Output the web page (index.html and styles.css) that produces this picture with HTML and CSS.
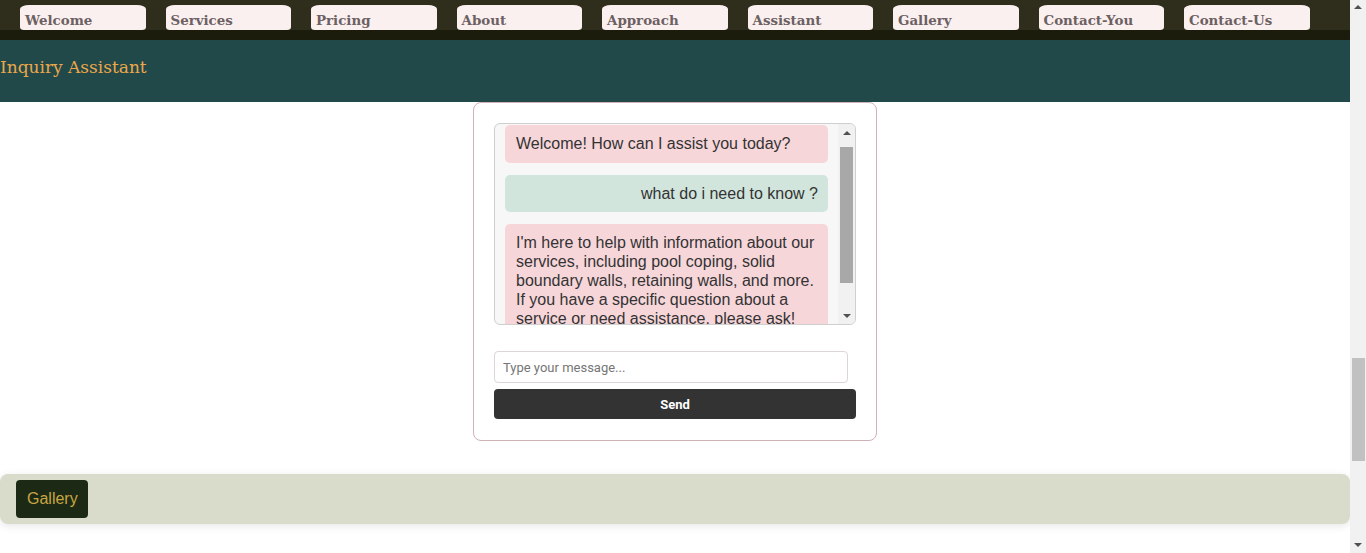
FILE: index.html
```html
<!DOCTYPE html>
<html lang="en">
<head>
<meta charset="utf-8">
<title>Inquiry Assistant</title>
<link rel="stylesheet" href="styles.css">
</head>
<body>
<div class="page">
  <nav class="topnav">
    <a class="tab">Welcome</a>
    <a class="tab">Services</a>
    <a class="tab">Pricing</a>
    <a class="tab">About</a>
    <a class="tab">Approach</a>
    <a class="tab">Assistant</a>
    <a class="tab">Gallery</a>
    <a class="tab">Contact-You</a>
    <a class="tab">Contact-Us</a>
  </nav>
  <header class="hero">
    <h1 class="hero-title">Inquiry Assistant</h1>
  </header>
  <main class="chat-wrap">
    <section class="chat">
      <div class="messages">
        <div class="msg-list">
          <div class="msg bot">Welcome! How can I assist you today?</div>
          <div class="msg user">what do i need to know ?</div>
          <div class="msg bot">I'm here to help with information about our services, including pool coping, solid boundary walls, retaining walls, and more. If you have a specific question about a service or need assistance, please ask!</div>
        </div>
        <div class="mini-scroll">
          <div class="ms-btn"><span class="arrow-up"></span></div>
          <div class="ms-track"><div class="ms-thumb"></div></div>
          <div class="ms-btn"><span class="arrow-down"></span></div>
        </div>
      </div>
      <input class="chat-input" type="text" placeholder="Type your message...">
      <button class="send-btn">Send</button>
    </section>
  </main>
  <footer class="gallery-bar">
    <button class="gallery-btn">Gallery</button>
  </footer>
</div>
<div class="vscroll">
  <div class="vs-btn"><span class="arrow-up"></span></div>
  <div class="vs-track"><div class="vs-thumb"></div></div>
  <div class="vs-btn"><span class="arrow-down"></span></div>
</div>
</body>
</html>
```
FILE: styles.css
```css
html, body {
  margin: 0;
  padding: 0;
  height: 553px;
  overflow: hidden;
  background: #ffffff;
}
body {
  display: flex;
}
.page {
  flex: 1;
  min-width: 0;
  height: 553px;
  display: flex;
  flex-direction: column;
}
.topnav {
  height: 30px;
  background: #2f2e1d;
  border-bottom: 10px solid #1c1c0c;
  display: flex;
  align-items: flex-end;
  gap: 20px;
  padding-left: 20px;
  flex-shrink: 0;
}
.tab {
  width: 125.5px;
  height: 25px;
  box-sizing: border-box;
  background: #fbf0f0;
  border-radius: 9px 9px 4px 4px / 4px 4px 3px 3px;
  font-family: "DejaVu Serif", serif;
  font-weight: bold;
  font-size: 13.4px;
  line-height: 21px;
  padding: 5px 0 0 5px;
  color: #6c6062;
  flex-shrink: 0;
}
.hero {
  height: 62px;
  box-sizing: border-box;
  background: #224949;
  padding-top: 15px;
  flex-shrink: 0;
}
.hero-title {
  margin: 0;
  font-family: "DejaVu Serif", serif;
  font-weight: normal;
  font-size: 17px;
  line-height: 24px;
  color: #eba74a;
}
.chat-wrap {
  display: flex;
  justify-content: center;
  flex-shrink: 0;
}
.chat {
  width: 404px;
  box-sizing: border-box;
  border: 1px solid #d0b1b6;
  border-radius: 8px;
  padding: 20px 20px 21px;
  background: #fff;
  display: flex;
  flex-direction: column;
}
.messages {
  height: 202px;
  box-sizing: border-box;
  border: 1px solid #cfcfcf;
  border-radius: 6px;
  background: #f7f7f7;
  overflow: hidden;
  display: flex;
  flex-shrink: 0;
}
.msg-list {
  flex: 1;
  min-width: 0;
  overflow: hidden;
  padding: 1px 10px 0 10px;
}
.msg {
  font-family: "Liberation Sans", Arial, sans-serif;
  font-size: 16px;
  line-height: 19px;
  color: #333;
  padding: 9px 10px 10px 11px;
  border-radius: 5px;
  margin-bottom: 12px;
}
.msg.bot {
  background: #f7d6da;
}
.msg.user {
  background: #d1e5dd;
  text-align: right;
  padding-bottom: 9px;
}
.mini-scroll {
  width: 17px;
  background: #f1f1f1;
  display: flex;
  flex-direction: column;
  flex-shrink: 0;
}
.ms-btn {
  height: 17px;
  display: flex;
  align-items: center;
  justify-content: center;
}
.ms-track {
  flex: 1;
}
.ms-thumb {
  margin: 6px 2px 0 2px;
  height: 136px;
  background: #a8a8a8;
}
.chat-input {
  margin-top: 26px;
  width: 354px;
  height: 32px;
  box-sizing: border-box;
  border: 1px solid #ddd6d6;
  border-radius: 4px;
  padding: 0 8px;
  font-family: Roboto, "Liberation Sans", sans-serif;
  font-size: 13px;
  color: #333;
  outline: none;
}
.chat-input::placeholder {
  color: #767676;
}
.send-btn {
  margin-top: 6px;
  width: 100%;
  height: 30px;
  border: none;
  border-radius: 4px;
  background: #333333;
  color: #fff;
  font-family: Roboto, "Liberation Sans", sans-serif;
  font-weight: bold;
  font-size: 13px;
}
.gallery-bar {
  margin-top: 33px;
  height: 50px;
  box-sizing: border-box;
  background: #d9dccb;
  border-radius: 8px;
  box-shadow: 0 2px 8px rgba(0, 0, 0, 0.1);
  padding: 6px 16px;
  display: flex;
  align-items: center;
  flex-shrink: 0;
}
.gallery-btn {
  height: 38px;
  border: none;
  border-radius: 4px;
  background: #1c2a15;
  color: #c8a543;
  font-family: "Liberation Sans", Arial, sans-serif;
  font-size: 16px;
  padding: 0 10px 0 11px;
}
.vscroll {
  width: 16px;
  height: 553px;
  background: #f1f1f1;
  display: flex;
  flex-direction: column;
  flex-shrink: 0;
}
.vs-btn {
  height: 17px;
  display: flex;
  align-items: center;
  justify-content: center;
}
.arrow-up {
  width: 0;
  height: 0;
  border-left: 4px solid transparent;
  border-right: 4px solid transparent;
  border-bottom: 4px solid #505050;
}
.arrow-down {
  width: 0;
  height: 0;
  border-left: 4px solid transparent;
  border-right: 4px solid transparent;
  border-top: 4px solid #505050;
}
.vscroll .arrow-up {
  margin-top: -4px;
}
.vs-track {
  flex: 1;
}
.vs-thumb {
  margin: 341px 1px 0 2px;
  height: 103px;
  background: #c1c1c1;
}
```
